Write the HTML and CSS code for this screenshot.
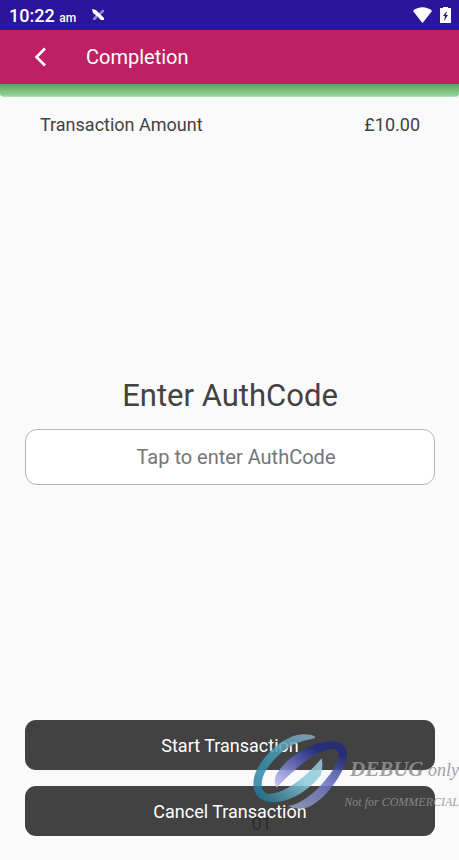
FILE: index.html
```html
<!DOCTYPE html>
<html lang="en">
<head>
    <meta charset="UTF-8">
    <meta name="viewport" content="width=device-width, initial-scale=1.0">
    <title>Completion</title>
    <link rel="stylesheet" href="styles.css">
</head>
<body>
    <div class="status-bar">
        <div class="status-time">10:22 <span class="status-ampm">am</span></div>
        <svg class="status-app" viewBox="0 0 12 12">
            <path d="M7 4L10 1H12V3L8 6zM4 6L1 9V11H3L6 8z" fill="#8f88d8"/>
            <path d="M0 0L4 1L12 9V11H9L6 8L1 4z" fill="#ffffff"/>
        </svg>
        <div class="status-icons">
            <svg class="wifi-icon" viewBox="0 0 19 16">
                <path d="M0 4C5 -1 14 -1 19 4L10 15.500Q9.500 16 9 15.500z" fill="#ffffff"/>
            </svg>
            <svg class="battery-icon" viewBox="0 0 11 16">
                <path d="M3 0H8V1H11V16H0V1H3z" fill="#ffffff"/>
                <path d="M7 4L3 9H5L4 14L8 8H6z" fill="#2b169b"/>
            </svg>
        </div>
    </div>

    <header class="nav-bar">
        <button class="back-button" type="button" aria-label="Back">
            <svg viewBox="0 0 12 20" fill="none" stroke="#ffffff" stroke-width="2.6">
                <path d="M11 1.500L2.500 10L11 18.500"/>
            </svg>
        </button>
        <h1 class="nav-title">Completion</h1>
    </header>
    <div class="nav-strip"></div>

    <main class="main-content">
        <div class="amount-row">
            <span>Transaction Amount</span>
            <span>£10.00</span>
        </div>

        <div class="auth-form">
            <label class="auth-label" for="authCode">Enter AuthCode</label>
            <input class="auth-input" id="authCode" type="text" placeholder="Tap to enter AuthCode">
        </div>

        <div class="actions">
            <button class="action-button" type="button">Start Transaction</button>
            <button class="action-button" type="button">Cancel Transaction</button>
        </div>
    </main>

    <div class="page-code">01</div>

    <div class="watermark">
        <svg class="watermark-logo" viewBox="0 0 330 285">
            <defs>
                <linearGradient id="teal" x1="0" y1="1" x2="1" y2="0">
                    <stop offset="0" stop-color="#1c7598"/>
                    <stop offset="0.5" stop-color="#449cb8"/>
                    <stop offset="1" stop-color="#8cacc2"/>
                </linearGradient>
                <linearGradient id="tealTail" x1="0" y1="1" x2="1" y2="0">
                    <stop offset="0" stop-color="#216f8c"/>
                    <stop offset="0.6" stop-color="#8ccbdc"/>
                    <stop offset="1" stop-color="#99cbdd"/>
                </linearGradient>
                <linearGradient id="blue" x1="0" y1="1" x2="1" y2="0">
                    <stop offset="0" stop-color="#c4c4f4"/>
                    <stop offset="0.45" stop-color="#5960b8"/>
                    <stop offset="0.7" stop-color="#222c80"/>
                </linearGradient>
                <linearGradient id="blueTail" x1="0" y1="1" x2="1" y2="0">
                    <stop offset="0" stop-color="#98a8bd"/>
                    <stop offset="0.5" stop-color="#737bc8"/>
                    <stop offset="1" stop-color="#222b82"/>
                </linearGradient>
            </defs>
            <path d="M212 34C200 27 175 24 148 33C95 53 48 105 32 150C23 181 30 211 55 225L80 209C52 205 48 180 58 152C72 116 115 76 150 58Q180 46 212 40z" fill="url(#teal)"/>
            <path d="M54 225C111 249 192 202 231 149Q238 125 233 100Q216 120 190 145C155 178 112 206 72 208z" fill="url(#tealTail)"/>
            <path d="M98 188C90 174 91 158 99 145C132 95 204 43 276 50C303 53 313 74 308 99L283 103C287 81 280 71 260 71C215 77 150 133 98 188z" fill="url(#blue)"/>
            <path d="M308 95C300 148 243 224 193 247Q158 257 132 243C168 239 214 205 248 160Q276 128 283 98z" fill="url(#blueTail)"/>
        </svg>
        <div class="watermark-text">
            <div class="watermark-title"><b class="watermark-mode">DEBUG</b> only</div>
            <div class="watermark-note">Not for COMMERCIAL</div>
        </div>
    </div>
</body>
</html>
```
FILE: styles.css
```css
* {
    margin: 0;
    padding: 0;
    box-sizing: border-box;
}

body {
    position: relative;
    display: flex;
    flex-direction: column;
    min-height: 100vh;
    background: #fafafa;
    color: #424242;
    font-family: Roboto, "Liberation Sans", sans-serif;
}

button,
input {
    font-family: inherit;
}

.status-bar {
    display: flex;
    align-items: center;
    height: 30px;
    padding: 0 8px 0 9px;
    background: #2b169b;
    color: #ffffff;
}

.status-time {
    font-size: 18px;
    font-weight: 500;
}

.status-ampm {
    font-size: 12px;
}

.status-app {
    width: 12px;
    height: 12px;
    margin-left: 16px;
}

.status-icons {
    display: flex;
    gap: 8px;
    margin-left: auto;
}

.wifi-icon {
    width: 19px;
    height: 16px;
}

.battery-icon {
    width: 11px;
    height: 16px;
}

.nav-bar {
    display: flex;
    align-items: center;
    height: 54px;
    padding: 0 24px;
    background: #bf1f63;
    color: #ffffff;
}

.back-button {
    display: flex;
    align-items: center;
    justify-content: center;
    width: 32px;
    height: 32px;
    margin-right: 30px;
    border: none;
    background: none;
    cursor: pointer;
}

.back-button svg {
    width: 12px;
    height: 20px;
}

.nav-title {
    font-size: 20px;
    font-weight: 400;
}

.nav-strip {
    height: 13px;
    border-radius: 0 0 4px 4px;
    background: linear-gradient(#57a05b, #77b97a 40%, #8dd092 85%, #b5e8b8);
}

.main-content {
    flex: 1;
    display: flex;
    flex-direction: column;
    justify-content: space-between;
    padding: 16px 24px 24px 25px;
}

.amount-row {
    display: flex;
    justify-content: space-between;
    padding: 0 15px;
    font-size: 18px;
    line-height: 24px;
}

.auth-form {
    display: flex;
    flex-direction: column;
    gap: 13px;
    padding-top: 3px;
    text-align: center;
}

.auth-label {
    font-size: 31px;
    line-height: 40px;
}

.auth-input {
    width: 100%;
    height: 56px;
    padding-left: 12px;
    border: 1px solid #b4b4b4;
    border-radius: 12px;
    background: #ffffff;
    color: #424242;
    font-size: 20px;
    text-align: center;
}

.auth-input::placeholder {
    color: #757575;
}

.actions {
    display: flex;
    flex-direction: column;
    gap: 16px;
}

.action-button {
    height: 50px;
    border: none;
    border-radius: 11px;
    background: #424242;
    color: #ffffff;
    font-size: 18px;
    cursor: pointer;
}

.page-code {
    position: absolute;
    left: 0;
    right: 0;
    bottom: 25px;
    padding-left: 64px;
    color: #2a2a2a;
    font-size: 18px;
    line-height: 22px;
    text-align: center;
    pointer-events: none;
}

/* overlay on top of the action buttons */
.watermark {
    position: absolute;
    right: 0;
    bottom: 40px;
    display: flex;
    align-items: center;
    color: #929292;
    font-family: "Liberation Serif", serif;
    font-style: italic;
    white-space: nowrap;
    opacity: 0.85;
    pointer-events: none;
}

.watermark-logo {
    width: 110px;
    height: 95px;
    margin-right: -10px;
}

.watermark-text {
    padding-top: 25px;
    text-align: right;
}

.watermark-title {
    font-size: 18px;
    line-height: 32px;
}

.watermark-mode {
    font-size: 21px;
}

.watermark-note {
    font-size: 12px;
    line-height: 32px;
}
```
